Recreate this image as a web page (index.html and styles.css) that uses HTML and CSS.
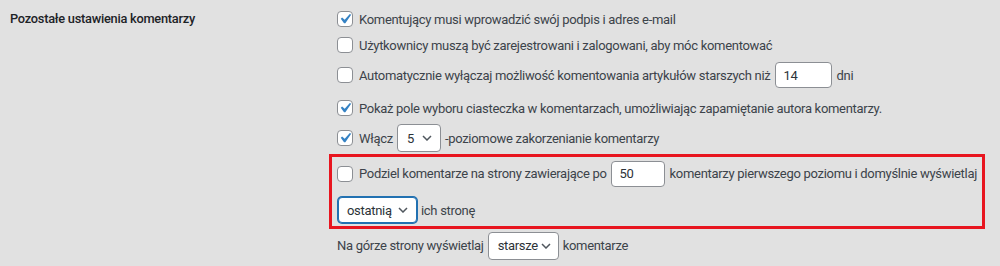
FILE: index.html
```html
<!DOCTYPE html>
<html lang="pl">
<head>
  <meta charset="UTF-8">
  <title>Ustawienia dyskusji</title>
  <link rel="stylesheet" href="styles.css">
</head>
<body>
  <div class="settings">
    <div class="row-label">Pozostałe ustawienia komentarzy</div>

    <div class="options">
      <label class="opt r1">
        <span class="cb checked"><svg viewBox="0 0 20 20"><path d="M14.83 4.89l1.34.94-5.81 8.38H9.02L5.78 9.67l1.34-1.25 2.57 2.4z"/></svg></span>
        Komentujący musi wprowadzić swój podpis i adres e-mail
      </label>
      <label class="opt r2">
        <span class="cb"></span>
        Użytkownicy muszą być zarejestrowani i zalogowani, aby móc komentować
      </label>
      <label class="opt r3">
        <span class="cb"></span>
        Automatycznie wyłączaj możliwość komentowania artykułów starszych niż
        <span class="num n14">14</span>
        dni
      </label>
      <label class="opt r4">
        <span class="cb checked"><svg viewBox="0 0 20 20"><path d="M14.83 4.89l1.34.94-5.81 8.38H9.02L5.78 9.67l1.34-1.25 2.57 2.4z"/></svg></span>
        Pokaż pole wyboru ciasteczka w komentarzach, umożliwiając zapamiętanie autora komentarzy.
      </label>
      <label class="opt r5">
        <span class="cb checked"><svg viewBox="0 0 20 20"><path d="M14.83 4.89l1.34.94-5.81 8.38H9.02L5.78 9.67l1.34-1.25 2.57 2.4z"/></svg></span>
        Włącz
        <span class="sel s5">5<svg viewBox="0 0 10 6"><polyline points="1,1 5,5 9,1"/></svg></span>
        -poziomowe zakorzenianie komentarzy
      </label>

      <!-- zaznaczony fragment -->
      <div class="highlight">
        <label class="opt r6">
          <span class="cb"></span>
          Podziel komentarze na strony zawierające po
          <span class="num n50">50</span>
          komentarzy pierwszego poziomu i domyślnie wyświetlaj
        </label>
        <div class="opt r7">
          <span class="sel focus last">ostatnią<svg viewBox="0 0 10 6"><polyline points="1,1 5,5 9,1"/></svg></span>
          ich stronę
        </div>
      </div>

      <div class="opt r8">
        Na górze strony wyświetlaj
        <span class="sel older">starsze<svg viewBox="0 0 10 6"><polyline points="1,1 5,5 9,1"/></svg></span>
        komentarze
      </div>
    </div>
  </div>
</body>
</html>
```

FILE: styles.css
```css
* {
  margin: 0;
  padding: 0;
  box-sizing: border-box;
}
body {
  font-family: Roboto, "Liberation Sans", sans-serif;
  font-size: 13px;
  letter-spacing: -0.3px;
  background-color: #e1e1e1;
  color: #3c434a;
  width: 1000px;
  height: 266px;
  overflow: hidden;
}

.settings {
  display: grid;
  grid-template-columns: 327px 1fr;
  padding-left: 10px;
}

.row-label {
  font-size: 12.8px;
  font-weight: 500;
  letter-spacing: -0.25px;
  color: #1d2327;
  padding-top: 11px;
}

.options {
  padding-top: 6px;
}

/* wiersze */
.opt {
  display: flex;
  align-items: center;
  height: 26px;
  white-space: nowrap;
}
.r3 { margin-top: 4px; }
.r4 { margin-top: 7px; }
.r5 { margin-top: 3px; height: 28px; }
.r6 { height: 27px; }
.r7 { margin-top: 10px; }
.r8 { margin-top: 3px; height: 27px; }

/* checkbox */
.cb {
  width: 16px;
  height: 16px;
  border: 1px solid #8c8f94;
  border-radius: 4px;
  background-color: #fff;
  margin-right: 6px;
  display: flex;
  align-items: center;
  justify-content: center;
  flex-shrink: 0;
}
.cb svg {
  width: 20px;
  height: 20px;
  fill: #3582c4;
  margin: -3px;
}

/* pola liczbowe */
.num {
  width: 57px;
  height: 26px;
  border: 1px solid #8c8f94;
  border-radius: 4px;
  background-color: #fff;
  color: #2c3338;
  padding: 0 8px;
  display: flex;
  align-items: center;
  margin: 0 5px 0 4px;
}

/* listy wyboru */
.sel {
  height: 28px;
  border: 1px solid #8c8f94;
  border-radius: 4px;
  background-color: #fff;
  color: #2c3338;
  display: flex;
  align-items: center;
  justify-content: space-between;
  padding: 0 8px 0 9px;
  margin: 0 4px;
}
.sel svg {
  width: 10px;
  height: 6px;
  flex-shrink: 0;
  fill: none;
  stroke: #50575e;
  stroke-width: 1.5;
}
.s5 { width: 44px; }
.last { width: 79px; margin-left: 1px; padding-left: 8px; height: 26px; }
.older { width: 71px; padding: 0 7px 0 9px; }
.sel.focus {
  border-color: #2271b1;
  box-shadow: 0 0 0 1px #2271b1;
}

/* czerwona ramka */
.highlight {
  margin-top: 2px;
  margin-left: -8px;
  width: 656px;
  border: 3px solid #e8151f;
  padding: 3px 5px 3px 5px;
}
```
